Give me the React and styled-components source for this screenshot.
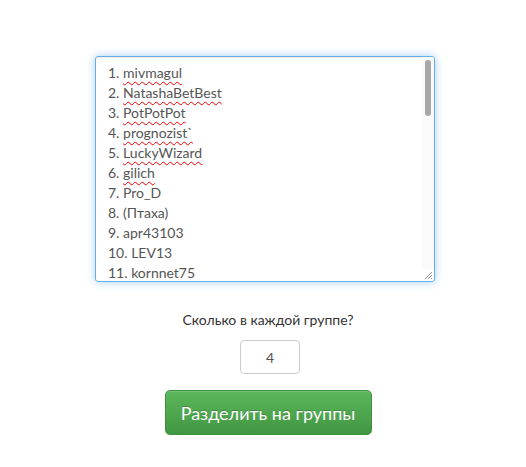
import React from 'react';
import styled, { createGlobalStyle } from 'styled-components';

const names = [
  ['1.', 'mivmagul', true],
  ['2.', 'NatashaBetBest', true],
  ['3.', 'PotPotPot', true],
  ['4.', 'prognozist`', true],
  ['5.', 'LuckyWizard', true],
  ['6.', 'gilich', true],
  ['7.', 'Pro_D', false],
  ['8.', '(Птаха)', false],
  ['9.', 'apr43103', false],
  ['10.', 'LEV13', false],
  ['11.', 'kornnet75', false],
];

const GlobalStyle = createGlobalStyle`
  body {
    margin: 0;
    background: #fff;
    font-family: Lato, "Open Sans", Arial, sans-serif;
  }
`;

const Page = styled.div`
  display: flex;
  flex-direction: column;
  align-items: center;
  padding: 56px 0 0 10px;
`;

const ListBox = styled.div`
  position: relative;
  box-sizing: border-box;
  width: 340px;
  height: 226px;
  margin-right: 6px;
  border: 1px solid #66afe9;
  border-radius: 3px;
  box-shadow: inset 0 1px 1px rgba(0, 0, 0, 0.075), 0 0 8px rgba(102, 175, 233, 0.6);
  overflow: hidden;
`;

const ListText = styled.div`
  padding: 6px 24px 0 12px;
  font-size: 14px;
  line-height: 20px;
  color: #555;
`;

const Line = styled.div`
  white-space: nowrap;
`;

const Name = styled.span`
  text-decoration: ${(p) => (p.$typo ? 'underline wavy #e00' : 'none')};
  text-decoration-thickness: 1px;
  text-underline-offset: 3px;
`;

/* scrollbar and resize grip sit over the text area */
const ScrollTrack = styled.div`
  position: absolute;
  top: 0;
  right: 0;
  width: 12px;
  bottom: 12px;
  background: #fafafa;
`;

const ScrollThumb = styled.div`
  margin: 3px 0 0 3px;
  width: 6px;
  height: 56px;
  border-radius: 3px;
  background: #a8a8a8;
`;

const Grip = styled.svg`
  position: absolute;
  right: 1px;
  bottom: 1px;
`;

const Label = styled.div`
  margin-top: 28px;
  font-size: 14px;
  line-height: 20px;
  color: #333;
`;

const CountInput = styled.input`
  box-sizing: border-box;
  margin: 10px 0 0 4px;
  width: 60px;
  height: 34px;
  border: 1px solid #ccc;
  border-radius: 4px;
  text-align: center;
  font-family: inherit;
  font-size: 14px;
  color: #555;
  outline: none;
`;

const SplitButton = styled.button`
  box-sizing: border-box;
  margin-top: 16px;
  width: 207px;
  height: 45px;
  border: 1px solid #3e8f3e;
  border-radius: 5px;
  background: linear-gradient(to bottom, #5cb85c 0%, #419641 100%);
  box-shadow: inset 0 1px 0 rgba(255, 255, 255, 0.15), 0 1px 1px rgba(0, 0, 0, 0.075);
  color: #fff;
  font-family: inherit;
  font-size: 18px;
  text-shadow: 0 -1px 0 rgba(0, 0, 0, 0.2);
  cursor: pointer;
`;

export default function App() {
  return (
    <>
      <GlobalStyle />
      <Page>
        <ListBox>
          <ListText>
            {names.map(([n, name, typo]) => (
              <Line key={n}>
                {n} <Name $typo={typo}>{name}</Name>
              </Line>
            ))}
          </ListText>
          <ScrollTrack>
            <ScrollThumb />
          </ScrollTrack>
          <Grip width="10" height="10" viewBox="0 0 10 10">
            <path d="M9 2L2 9M9 5L5 9M9 8L8 9" stroke="#999" strokeWidth="1" />
          </Grip>
        </ListBox>
        <Label>Сколько в каждой группе?</Label>
        <CountInput defaultValue="4" />
        <SplitButton>Разделить на группы</SplitButton>
      </Page>
    </>
  );
}
